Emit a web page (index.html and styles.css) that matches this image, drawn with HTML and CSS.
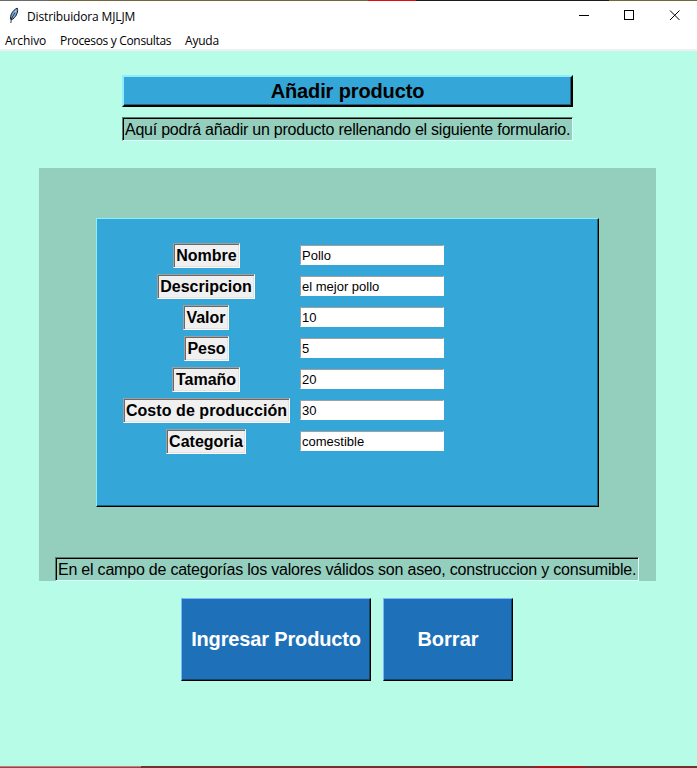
FILE: index.html
```html
<!DOCTYPE html>
<html lang="es">
<head>
<meta charset="utf-8">
<title>Distribuidora MJLJM</title>
<link rel="stylesheet" href="styles.css">
</head>
<body>
<div class="edge-top"><i class="t1"></i><i class="t2"></i><i class="t3"></i><i class="t4"></i><i class="t5"></i></div>
<header class="titlebar">
  <svg class="feather" width="12" height="18" viewBox="0 0 12 18">
    <path d="M2.800 12.500C1.500 9 4.500 3 9.300 1.200C10.400 4 8.800 9 5 12Z" fill="#6fa3d8" stroke="#171c22" stroke-width="1"/>
    <path d="M8 3.500L4.500 10" stroke="#a9d2f5" stroke-width="1.300"/>
    <path d="M7 5.500L3.500 11.500L2.800 16" fill="none" stroke="#171c22" stroke-width="0.900"/>
  </svg>
  <span class="name">Distribuidora MJLJM</span>
  <svg class="controls" width="104" height="12" viewBox="0 0 104 12" fill="none" stroke="#000" stroke-width="1">
    <path d="M0 5.500H10"/>
    <rect x="45.500" y="0.500" width="9" height="9"/>
    <path d="M91 .500L100.500 10M100.500 .500L91 10"/>
  </svg>
</header>
<nav class="menu"><span class="m1">Archivo</span><span class="m2">Procesos y Consultas</span><span class="m3">Ayuda</span></nav>
<main>
  <h1><span>Añadir producto</span></h1>
  <p class="note intro"><span>Aquí podrá añadir un producto rellenando el siguiente formulario.</span></p>
  <section class="panel">
    <form class="fields">
      <label class="w67" for="f1">Nombre</label><input id="f1" value="Pollo">
      <label class="w98" for="f2">Descripcion</label><input id="f2" value="el mejor pollo">
      <label class="w46" for="f3">Valor</label><input id="f3" value="10">
      <label class="w45" for="f4">Peso</label><input id="f4" value="5">
      <label class="w68" for="f5">Tamaño</label><input id="f5" value="20">
      <label class="w167" for="f6">Costo de producción</label><input id="f6" value="30">
      <label class="w80" for="f7">Categoria</label><input id="f7" value="comestible">
    </form>
    <p class="note hint"><span>En el campo de categorías los valores válidos son aseo, construccion y consumible.</span></p>
  </section>
  <div class="actions">
    <button class="save">Ingresar Producto</button>
    <button class="clear">Borrar</button>
  </div>
</main>
<div class="edge-bottom"><i class="b1"></i><i class="b2"></i><i class="b3"></i><i class="b4"></i></div>
</body>
</html>
```
FILE: styles.css
```css
* { box-sizing: border-box; }
body {
  margin: 0;
  height: 768px;
  display: flex;
  flex-direction: column;
  overflow: hidden;
  background: #b7fce6;
  font-family: "Liberation Sans", Arial, sans-serif;
  color: #000;
}
.edge-top, .edge-bottom { display: flex; flex: none; }
.edge-top { height: 1px; }
.t1 { width: 48px; background: #6d6b69; }
.t2 { width: 320px; background: #73663a; }
.t3 { width: 48px; background: #e00b0b; }
.t4 { width: 193px; background: #1c1a20; }
.t5 { flex: 1; background: #73663a; }
.edge-bottom { height: 2px; }
.b1 { width: 141px; background: #9b4448; border-top: 1px solid #c08080; }
.b2 { width: 395px; background: #74312f; }
.b3 { width: 48px; background: #ae1719; }
.b4 { flex: 1; background: #74312f; }
.titlebar {
  height: 30px;
  flex: none;
  display: flex;
  align-items: center;
  padding: 0 13px 0 8px;
  background: #fff;
  font: 12px "Open Sans", "Noto Sans", sans-serif;
}
.feather { flex: none; margin-right: 7px; }
.name { flex: 1; letter-spacing: -0.15px; }
.controls { margin-right: 1px; }
.menu {
  height: 20px;
  flex: none;
  display: flex;
  padding-left: 5px;
  background: #fff;
  border-bottom: 2px solid #f0f0f0;
  font: 12px/20px "Open Sans", "Noto Sans", sans-serif;
  white-space: nowrap;
}
.m1 { width: 55px; letter-spacing: -0.1px; }
.m2 { width: 125px; letter-spacing: -0.32px; }
.m3 { letter-spacing: -0.2px; }
main {
  flex: 1;
  display: flex;
  flex-direction: column;
  align-items: center;
  padding-top: 24px;
}
h1, p { margin: 0; }
h1 {
  width: 451px;
  height: 32px;
  margin-right: 2px;
  background: #34a6d7;
  border: 2px solid;
  border-color: #8ceeff #000 #000 #8ceeff;
  box-shadow: inset -1px -1px #1f6381;
  font-size: 20px;
  line-height: 29px;
  letter-spacing: -0.13px;
  text-align: center;
  white-space: nowrap;
}
.note {
  height: 24px;
  background: #94cfbe;
  border: 1px solid;
  border-color: #597c72 #deffff #deffff #597c72;
  box-shadow: inset 1px 1px #000;
  padding-left: 2px;
  font-size: 16px;
  line-height: 23px;
  white-space: nowrap;
}
.intro { width: 451px; margin: 10px 2px 27px 0; letter-spacing: -0.24px; }
.panel {
  width: 617px;
  height: 413px;
  margin-right: 2px;
  padding-top: 50px;
  background: #94cfbe;
  display: flex;
  flex-direction: column;
}
.fields {
  width: 503px;
  height: 289px;
  margin-left: 57px;
  padding: 24px 0 0 26px;
  display: grid;
  grid-template-columns: 167px 144px;
  grid-auto-rows: 25px;
  column-gap: 10px;
  row-gap: 6px;
  align-items: center;
  justify-items: center;
  background: #34a6d7;
  border: 1px solid;
  border-color: #8ceeff #000 #000 #8ceeff;
  box-shadow: inset -1px -1px #1f6381;
}
label {
  height: 25px;
  background: #f0f0f0;
  border: 1px solid;
  border-color: #a0a0a0 #fff #fff #a0a0a0;
  box-shadow: inset 1px 1px #696969, inset -1px -1px #e3e3e3;
  font-size: 16px;
  font-weight: bold;
  line-height: 23px;
  text-align: center;
  white-space: nowrap;
}
.w67 { width: 67px; }
.w98 { width: 98px; margin-right: 1px; }
.w46 { width: 46px; margin-right: 1px; }
.w45 { width: 45px; }
.w68 { width: 68px; margin-right: 1px; }
.w167 { width: 167px; letter-spacing: 0.06px; }
.w80 { width: 80px; margin-right: 1px; }
input {
  width: 144px;
  height: 20px;
  margin: 0 0 1px;
  padding: 1px 0 0 1px;
  border: 1px solid;
  border-color: #a0a0a0 #fff #fff #a0a0a0;
  border-radius: 0;
  background: #fff;
  outline: 0;
  color: #000;
  font: 13px "Liberation Sans", Arial, sans-serif;
}
.hint { width: 584px; margin: 50px 0 0 16px; letter-spacing: -0.215px; }
.actions { display: flex; gap: 12px; margin: 17px 3px 0 0; }
button {
  height: 83px;
  padding: 0;
  border: 1px solid;
  border-color: #7ab5ff #000 #000 #7ab5ff;
  border-radius: 0;
  box-shadow: inset -1px -1px #12446e;
  background: #1e71b8;
  color: #fff;
  font: bold 20px "Liberation Sans", Arial, sans-serif;
  white-space: nowrap;
}
.save { width: 190px; letter-spacing: -0.15px; }
.clear { width: 130px; }
```
